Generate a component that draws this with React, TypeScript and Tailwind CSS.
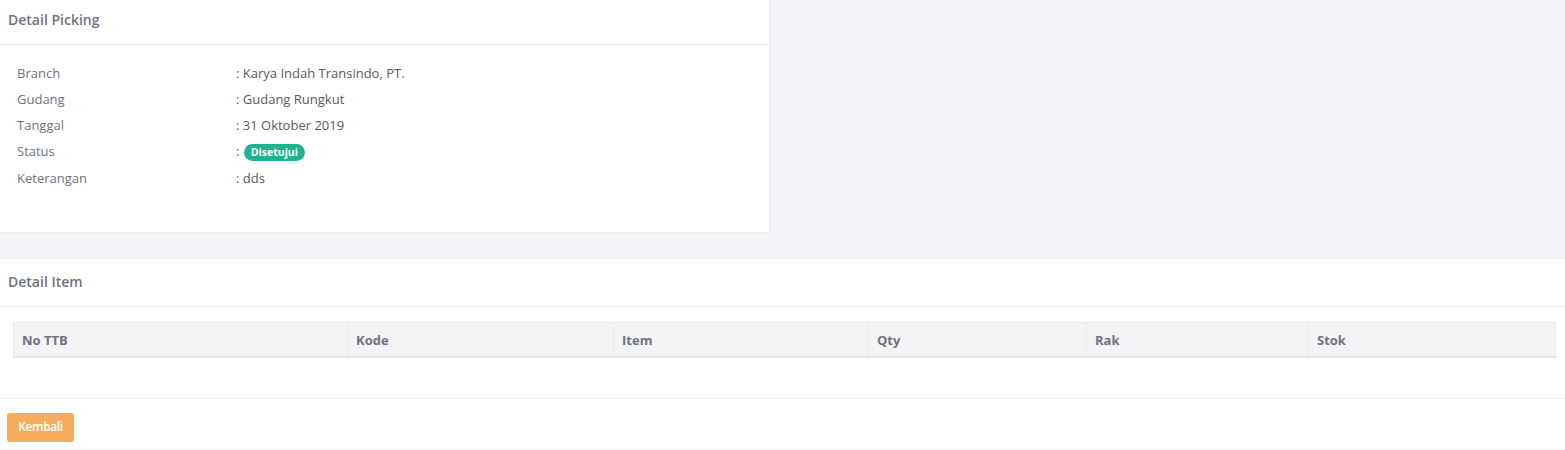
const rows = [
  { label: 'Branch', value: 'Karya Indah Transindo, PT.' },
  { label: 'Gudang', value: 'Gudang Rungkut' },
  { label: 'Tanggal', value: '31 Oktober 2019' },
  { label: 'Status', badge: 'Disetujui' },
  { label: 'Keterangan', value: 'dds' },
];

const columns = [
  { title: 'No TTB', w: 'w-[334px]' },
  { title: 'Kode', w: 'w-[266px]' },
  { title: 'Item', w: 'w-[255px]' },
  { title: 'Qty', w: 'w-[218px]' },
  { title: 'Rak', w: 'w-[222px]' },
  { title: 'Stok', w: '' },
];

export default function App() {
  return (
    <div className="min-h-[450px] w-full bg-[#f3f4f8] font-['Open_Sans',sans-serif] text-[#575962]">
      {/* Detail Picking */}
      <div className="w-[770px] bg-white border-r border-b border-[#ebedf2]">
        <div className="h-[45px] px-2 flex items-center border-b border-[#ebedf2]">
          <h3 className="text-[14px] font-semibold text-[#6f727d] leading-none -mt-[5px]">Detail Picking</h3>
        </div>
        <div className="pl-[17px] pt-[16px] pb-[40px]">
          {rows.map((r) => (
            <div
              key={r.label}
              className={`flex items-center h-[26px] text-[13px] ${r.label === 'Keterangan' ? 'mt-[1px]' : ''}`}
            >
              <div className="w-[219px] text-[#6f727d]">{r.label}</div>
              <div className="flex items-center text-[#575962]">
                <span>:&nbsp;</span>
                {r.badge ? (
                  <span className="ml-[1px] mt-[1px] rounded-full bg-[#1fb293] px-[7px] py-[2px] text-[10.5px] font-bold leading-[13px] text-white">
                    {r.badge}
                  </span>
                ) : (
                  <span>{r.value}</span>
                )}
              </div>
            </div>
          ))}
        </div>
      </div>

      {/* Detail Item */}
      <div className="mt-[25px] bg-white border-t border-b border-[#ebedf2]">
        <div className="h-[48px] px-2 flex items-center border-b border-[#ebedf2]">
          <h3 className="text-[14px] font-semibold text-[#6f727d] leading-none -mt-[2px]">Detail Item</h3>
        </div>
        <div className="pl-[13px] pr-[9px] pt-[15px] pb-[40px] border-b border-[#ebedf2]">
          <table className="w-full table-fixed border-collapse">
            <thead>
              <tr className="bg-[#f4f4f6] h-[34px]">
                {columns.map((c) => (
                  <th
                    key={c.title}
                    className={`${c.w} border border-[#e9eaee] border-b-2 border-b-[#e2e3e7] px-[8px] pt-[2px] text-left text-[13px] font-bold text-[#6f727d]`}
                  >
                    {c.title}
                  </th>
                ))}
              </tr>
            </thead>
          </table>
        </div>
        <div className="h-[50px] px-[7px] flex items-center">
          <button className="h-[29px] w-[67px] rounded-[3px] bg-[#f7ad5e] text-[12px] font-semibold text-white tracking-[-0.4px] mt-[7px]">
            Kembali
          </button>
        </div>
      </div>
    </div>
  );
}
